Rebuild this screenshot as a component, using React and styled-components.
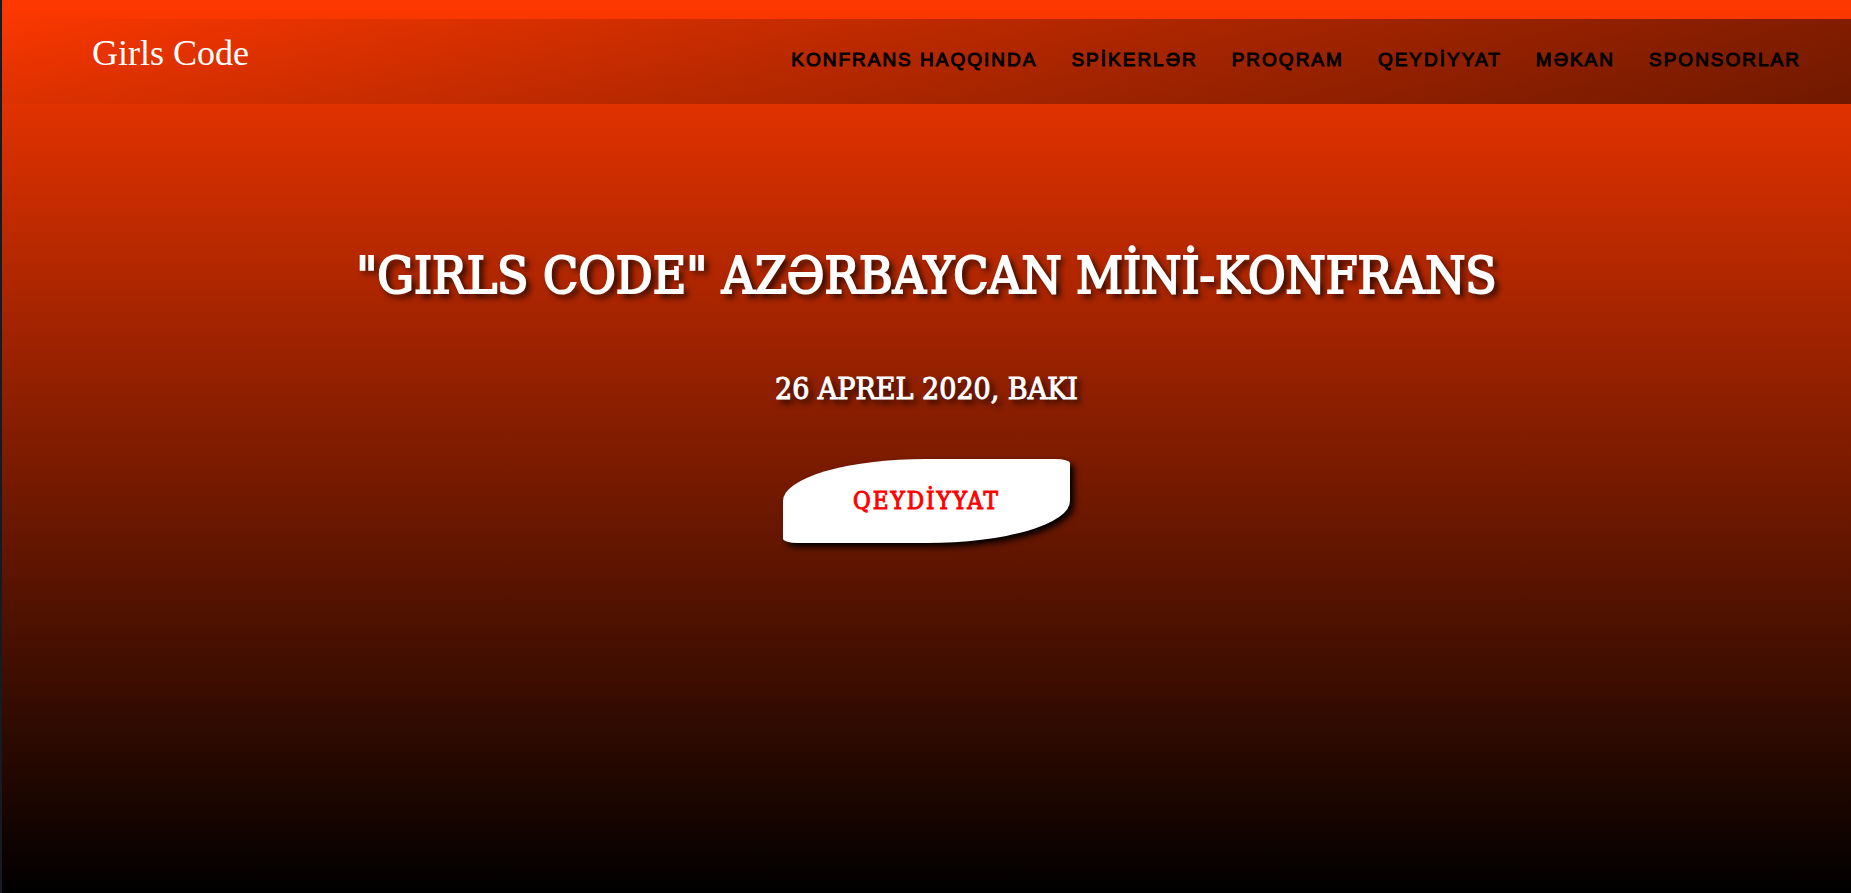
import React from "react";
import styled, { createGlobalStyle } from "styled-components";

const GlobalStyle = createGlobalStyle`
  * { box-sizing: border-box; }
  body { margin: 0; background: #000; }
`;

const serif = `"DejaVu Serif Condensed", "DejaVu Serif", "Liberation Serif", serif`;

const Page = styled.div`
  min-height: 100vh;
  padding-top: 19px;
  border-left: 2px solid #151b20;
  background: linear-gradient(to bottom, #ff3800, #000) padding-box;
`;

const Header = styled.header`
  display: flex;
  justify-content: space-between;
  align-items: flex-start;
  padding: 14px 50px 31px 90px;
  background: linear-gradient(135deg, transparent, rgba(0, 0, 0, 0.5));
`;

const Logo = styled.a`
  color: #fff;
  font: 36px/40px "Liberation Serif", serif;
  text-decoration: none;
`;

const Nav = styled.nav`
  display: flex;
  gap: 34px;
  padding-top: 14px;
`;

const NavLink = styled.a`
  color: #000;
  font: 19px/26px "Liberation Sans", Arial, sans-serif;
  letter-spacing: 2px;
  -webkit-text-stroke: 1px currentColor;
  text-decoration: none;
  white-space: nowrap;
`;

const Hero = styled.main`
  display: flex;
  flex-direction: column;
  align-items: center;
  padding: 134px 24px 48px;
  text-align: center;
  font-family: ${serif};
`;

const Title = styled.h1`
  margin: 0;
  color: #fff;
  font-size: 51px;
  font-weight: 400;
  line-height: 76px;
  -webkit-text-stroke: 2px currentColor;
  text-shadow: 4px 4px 6px #000;
`;

const EventDate = styled.h2`
  margin: 53px 0 0;
  color: #fff;
  font-size: 30px;
  font-weight: 400;
  line-height: 44px;
  -webkit-text-stroke: 1px currentColor;
  text-shadow: 4px 4px 6px #000;
`;

const RegisterButton = styled.button`
  margin-top: 48px;
  padding: 22px 70px;
  border: 0;
  border-radius: 50% 5%;
  background: #fff;
  box-shadow: 4px 4px 6px #000;
  color: #f00;
  font: 24px/40px ${serif};
  letter-spacing: 2px;
  -webkit-text-stroke: 1px currentColor;
  cursor: pointer;
`;

const links = [
  ["KONFRANS HAQQINDA", "#konfrans"],
  ["SPİKERLƏR", "#spikerler"],
  ["PROQRAM", "#proqram"],
  ["QEYDİYYAT", "#qeydiyyat"],
  ["MƏKAN", "#mekan"],
  ["SPONSORLAR", "#sponsorlar"],
];

export default function App() {
  return (
    <Page lang="az">
      <GlobalStyle />
      <Header>
        <Logo href="#">Girls Code</Logo>
        <Nav>
          {links.map(([label, href]) => (
            <NavLink key={href} href={href}>{label}</NavLink>
          ))}
        </Nav>
      </Header>
      <Hero>
        <Title>"GIRLS CODE" AZƏRBAYCAN MİNİ-KONFRANS</Title>
        <EventDate>26 APREL 2020, BAKI</EventDate>
        <RegisterButton type="button">QEYDİYYAT</RegisterButton>
      </Hero>
    </Page>
  );
}
